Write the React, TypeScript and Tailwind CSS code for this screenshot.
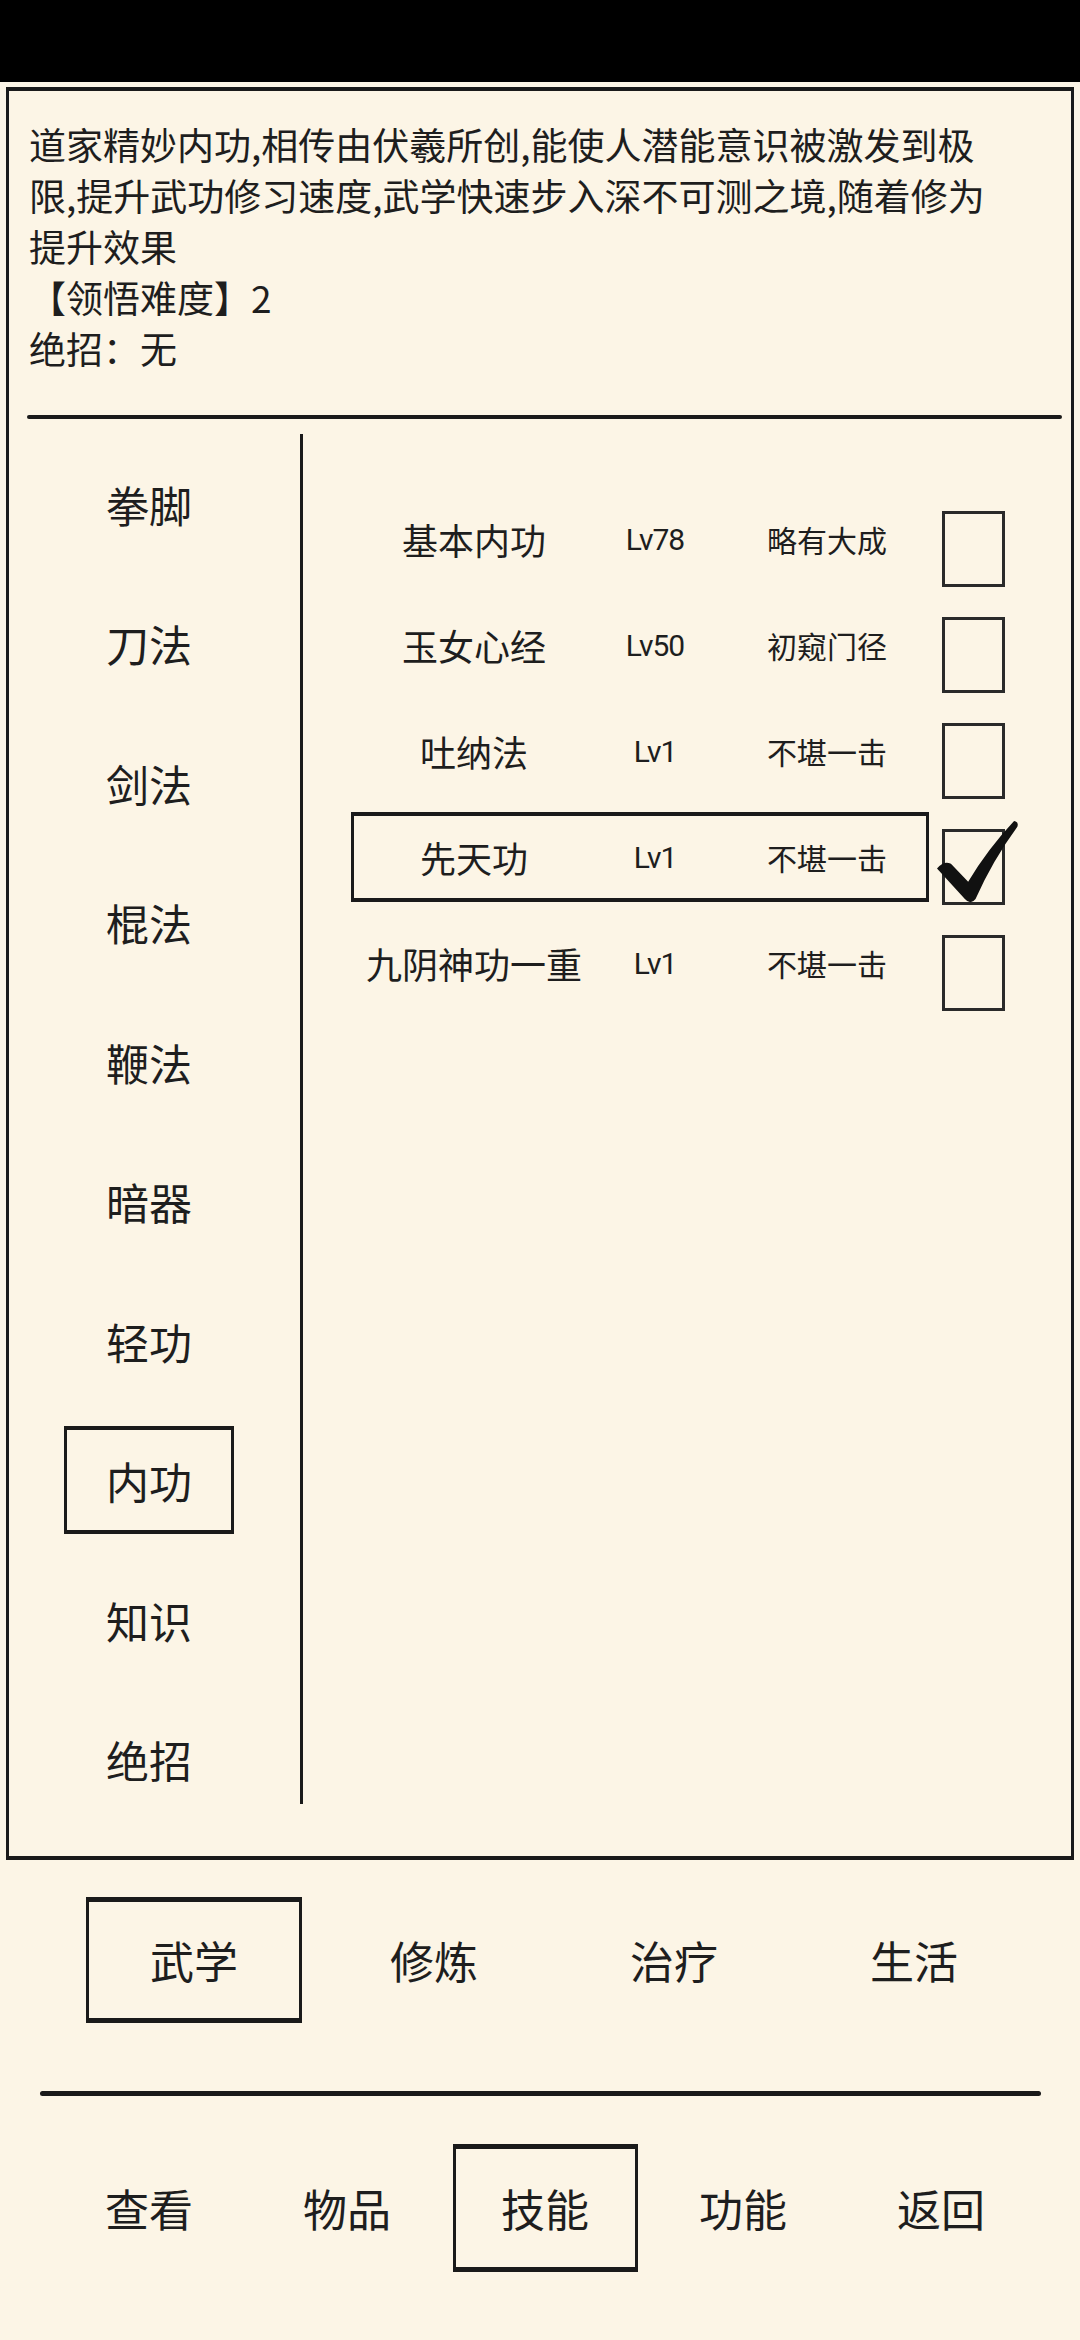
import { useState } from "react";

const skills = [
	{ name: "基本内功", lv: "Lv78", rank: "略有大成", checked: false },
	{ name: "玉女心经", lv: "Lv50", rank: "初窥门径", checked: false },
	{ name: "吐纳法", lv: "Lv1", rank: "不堪一击", checked: false },
	{ name: "先天功", lv: "Lv1", rank: "不堪一击", checked: true },
	{ name: "九阴神功一重", lv: "Lv1", rank: "不堪一击", checked: false },
];

const categories = ["拳脚", "刀法", "剑法", "棍法", "鞭法", "暗器", "轻功", "内功", "知识", "绝招"];
const tabs = ["武学", "修炼", "治疗", "生活"];
const navs = ["查看", "物品", "技能", "功能", "返回"];

function CheckMark() {
	return (
		<svg viewBox="0 0 100 100" className="absolute -left-[8px] -top-[12px] h-[84px] w-[82px]">
			<path
				d="M0 58 Q8 48 17 52 L38 74 Q62 34 94 0 Q100 1 98 7 Q68 48 47 95 Q41 103 34 95 Z"
				fill="#111"
			/>
		</svg>
	);
}

export default function App() {
	const [category, setCategory] = useState("内功");
	const [tab, setTab] = useState("武学");
	const [nav, setNav] = useState("技能");
	const selected = "先天功";

	return (
		<div className="min-h-[2340px] bg-[#fcf5e6] font-['Noto_Sans_CJK_SC','Noto_Sans',sans-serif] text-[#1e1e1e]">
			<div className="h-[82px] bg-black" />

			<div className="mx-[6px] mt-[5px] flex h-[1773px] flex-col border-x-[3px] border-y-[4px] border-[#1a1a1a]">
				<div className="w-[985px] pl-[20px] pt-[28px] text-[37px] leading-[51px]">
					<p>道家精妙内功,相传由伏羲所创,能使人潜能意识被激发到极限,提升武功修习速度,武学快速步入深不可测之境,随着修为提升效果</p>
					<p>【领悟难度】2</p>
					<p>绝招：无</p>
				</div>

				<div className="ml-[18px] mr-[9px] mt-[41px] h-[4px] rounded-full bg-[#1a1a1a]" />

				<div className="flex flex-1">
					<div className="flex w-[280px] flex-col pt-[15px]">
						{categories.map((c) => (
							<button
								key={c}
								type="button"
								onClick={() => setCategory(c)}
								className="flex h-[139.5px] items-center justify-center text-[43px]"
							>
								{c === category ? (
									<span className="flex h-[108px] w-[170px] items-center justify-center border-x-[3px] border-y-4 border-[#1a1a1a]">
										{c}
									</span>
								) : (
									c
								)}
							</button>
						))}
					</div>

					<div className="mb-[52px] ml-[11px] mt-[15px] w-[3px] bg-[#1a1a1a]" />

					<div className="flex flex-1 flex-col pl-[48px] pt-[67px]">
						{skills.map((s) => (
							<div key={s.name} className="flex h-[106px] items-center">
								<div
									className={`flex h-[90px] w-[578px] items-center ${
										s.name === selected ? "border-x-[3px] border-y-4 border-[#1a1a1a]" : "border-[3px] border-transparent"
									}`}
								>
									<span className="w-[240px] text-center text-[36px]">{s.name}</span>
									<span className="w-[122px] text-center font-['Roboto',sans-serif] text-[30px] tracking-[-1px]">
										{s.lv}
									</span>
									<span className="w-[210px] pl-[12px] text-center text-[30px]">{s.rank}</span>
								</div>
								<div className="relative ml-[13px] mt-[20px] h-[76px] w-[63px] border-x-[3px] border-y-[3px] border-[#2a2a2a]">
									{s.checked && <CheckMark />}
								</div>
							</div>
						))}
					</div>
				</div>
			</div>

			<div className="mt-[37px] flex h-[126px] pl-[74px]">
				{tabs.map((t) => (
					<button
						key={t}
						type="button"
						onClick={() => setTab(t)}
						className="flex w-[240px] items-center justify-center text-[44px]"
					>
						{t === tab ? (
							<span className="flex h-[126px] w-[216px] items-center justify-center border-x-[3px] border-y-[5px] border-[#1a1a1a]">
								{t}
							</span>
						) : (
							t
						)}
					</button>
				))}
			</div>

			<div className="ml-[40px] mt-[68px] h-[5px] w-[1001px] rounded-full bg-[#1a1a1a]" />

			<div className="mt-[48px] flex h-[128px] pl-[50px]">
				{navs.map((n) => (
					<button
						key={n}
						type="button"
						onClick={() => setNav(n)}
						className="flex w-[198px] items-center justify-center text-[44px]"
					>
						{n === nav ? (
							<span className="flex h-[128px] w-[185px] items-center justify-center border-x-[3px] border-y-[5px] border-[#1a1a1a]">
								{n}
							</span>
						) : (
							n
						)}
					</button>
				))}
			</div>
		</div>
	);
}
